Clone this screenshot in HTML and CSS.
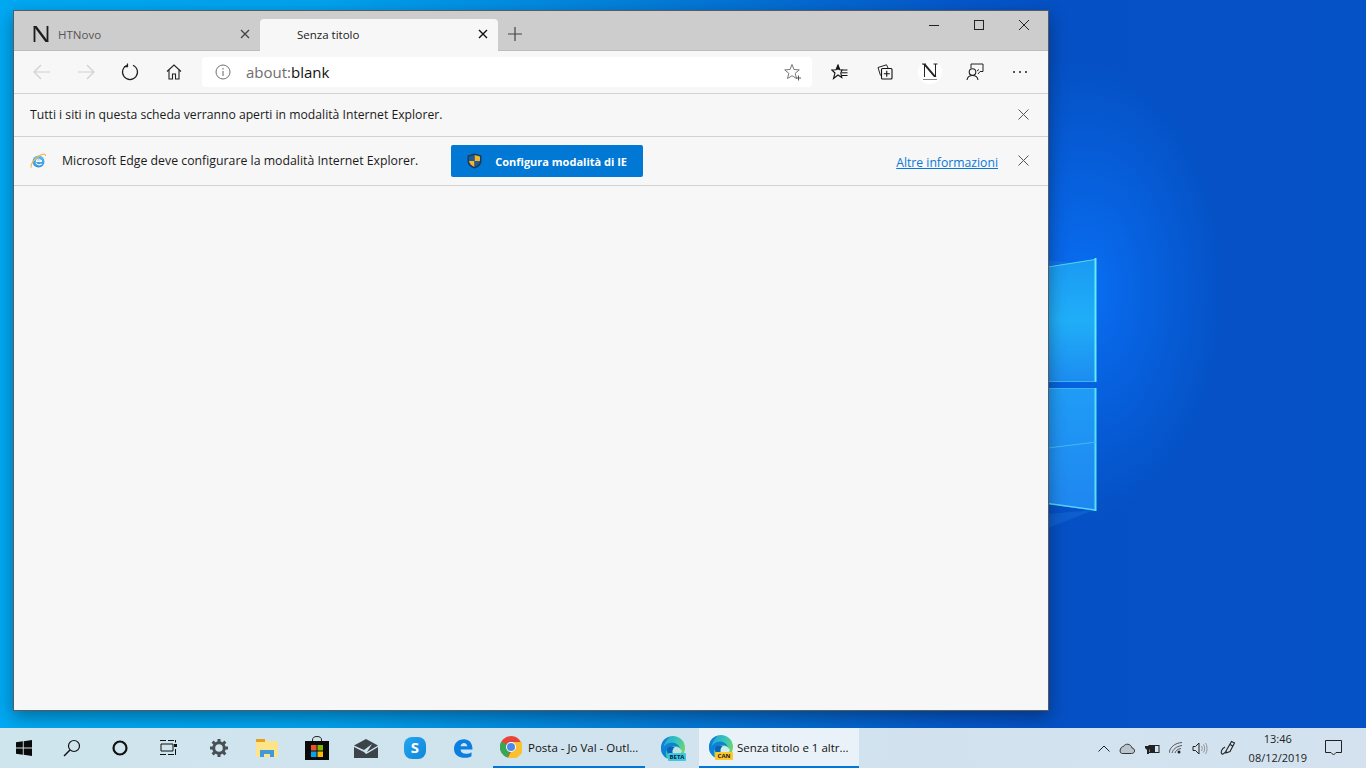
FILE: index.html
```html
<!DOCTYPE html>
<html lang="it">
<head>
<meta charset="utf-8">
<title>Senza titolo</title>
<link rel="stylesheet" href="styles.css">
</head>
<body>
<div class="desktop">
  <svg class="wallpaper-logo" width="80" height="290" viewBox="0 0 80 290">
    <defs>
      <linearGradient id="pane" x1="0" y1="0" x2="0" y2="1"><stop offset="0" stop-color="#1a9af2"/><stop offset=".5" stop-color="#20aef8"/><stop offset="1" stop-color="#1c8cf0"/></linearGradient>
      <linearGradient id="pane2" x1="0" y1="0" x2="0" y2="1"><stop offset="0" stop-color="#1f9cf6"/><stop offset="1" stop-color="#1f86f0"/></linearGradient>
    </defs>
    <polygon points="0,2 46,8 0,18" fill="#3a9cf8" opacity=".2"/>
    <polygon points="0,256 46,252 0,270" fill="#3a9cf8" opacity=".18"/>
    <polygon points="0,9 48,1 48,124 0,124" fill="url(#pane)"/>
    <polygon points="0,131 48,131 48,253 0,246" fill="url(#pane2)"/>
    <polyline points="0,9 47,1.500" fill="none" stroke="#52d4f4" stroke-width="1.200"/>
    <line x1="47.500" y1="0" x2="47.500" y2="124" stroke="#62ecf4" stroke-width="2"/>
    <line x1="0" y1="123.500" x2="47" y2="123.500" stroke="#3fb4f2" stroke-width="1"/>
    <line x1="0" y1="130.500" x2="47" y2="130.500" stroke="#3fb4f2" stroke-width="1"/>
    <line x1="47.500" y1="130" x2="47.500" y2="253" stroke="#56e2f6" stroke-width="2"/>
    <line x1="0" y1="245.500" x2="47" y2="252" stroke="#52d4f4" stroke-width="1.400"/>
    <line x1="0" y1="190" x2="48" y2="184" stroke="#46b8f4" stroke-width="1"/>
  </svg>

  <main class="window">
    <div class="tabstrip">
      <div class="tab">
        <svg class="favicon" width="18" height="18" viewBox="0 0 18 18"><path d="M2.500 1V17M15.500 1V17" fill="none" stroke="#1c1c1c" stroke-width="1.800"/><path d="M1.500 1 4.500 1 16.500 17 13.500 17Z" fill="#1c1c1c"/></svg>
        <span class="tab-title">HTNovo</span>
        <svg class="tab-x" width="10" height="10" viewBox="0 0 10 10"><path d="M1 1 9 9M9 1 1 9" stroke="#444" stroke-width="1.300"/></svg>
      </div>
      <div class="tab tab-active">
        <span class="tab-title">Senza titolo</span>
        <svg class="tab-x" width="10" height="10" viewBox="0 0 10 10"><path d="M1 1 9 9M9 1 1 9" stroke="#111" stroke-width="1.400"/></svg>
      </div>
      <svg class="newtab" width="14" height="14" viewBox="0 0 14 14"><path d="M7 0V14M0 7H14" stroke="#444" stroke-width="1.200"/></svg>
      <div class="winctl">
        <span class="winbtn"><svg width="10" height="10" viewBox="0 0 10 10"><path d="M0 5.500H10" stroke="#222" stroke-width="1"/></svg></span>
        <span class="winbtn"><svg width="10" height="10" viewBox="0 0 10 10"><rect x=".5" y=".5" width="9" height="9" fill="none" stroke="#222"/></svg></span>
        <span class="winbtn"><svg width="10" height="10" viewBox="0 0 10 10"><path d="M0 0 10 10M10 0 0 10" stroke="#222" stroke-width="1"/></svg></span>
      </div>
    </div>

    <div class="toolbar">
      <span class="navbtn"><svg width="18" height="16" viewBox="0 0 18 16"><path d="M17 8H1M8 1 1 8 8 15" fill="none" stroke="#d0d0d0" stroke-width="1.200"/></svg></span>
      <span class="navbtn"><svg width="18" height="16" viewBox="0 0 18 16"><path d="M1 8H17M10 1 17 8 10 15" fill="none" stroke="#d0d0d0" stroke-width="1.200"/></svg></span>
      <span class="navbtn"><svg width="18" height="18" viewBox="0 0 18 18"><path d="M6 2.200A7.500 7.500 0 1 0 12 2.200" fill="none" stroke="#222" stroke-width="1.200"/><path d="M6.500 .5V3.700H3" fill="none" stroke="#222" stroke-width="1.200"/></svg></span>
      <span class="navbtn"><svg width="16" height="16" viewBox="0 0 16 16"><path d="M1 7.500 8 1 15 7.500M3 6V15H6.500V10H9.500V15H13V6" fill="none" stroke="#222" stroke-width="1.100"/></svg></span>
      <div class="address">
        <svg class="addr-info" width="16" height="16" viewBox="0 0 16 16"><circle cx="8" cy="8" r="7" fill="none" stroke="#707070"/><path d="M8 7V12M8 4V5.500" stroke="#707070" stroke-width="1.100"/></svg>
        <span class="addr-text"><span class="addr-scheme">about:</span>blank</span>
        <svg class="addr-star" width="18" height="18" viewBox="0 0 18 18"><path d="M8 1.500 10 6.500 15.300 6.900 11.200 10.300 12.500 15.500 8 12.700 3.500 15.500 4.800 10.300 .7 6.900 6 6.500Z" fill="none" stroke="#777" stroke-width="1"/><path d="M14.500 12.500V17.500M12 15H17" stroke="#555" stroke-width="1"/></svg>
      </div>
      <span class="toolbtn"><svg width="17" height="16" viewBox="0 0 17 16"><path d="M7 1 8.800 5.800 11 6 9.800 9 10.800 13.500 7 11 2.500 14.500 4 9 .8 6 5 5.800Z" fill="none" stroke="#111" stroke-width="1.100"/><path d="M7 1 8.800 5.800H5Z" fill="#111"/><path d="M10.500 6H16.500M10.500 8.800H16.500M10.500 11.500H16.500" stroke="#111" stroke-width="1"/></svg></span>
      <span class="toolbtn"><svg width="16" height="16" viewBox="0 0 16 16"><path d="M3.500 11.500 1 3.500 9.500 .8 11 4" fill="none" stroke="#222" stroke-width="1"/><rect x="4.500" y="4.500" width="10.500" height="10.500" rx="1" fill="#f7f7f7" stroke="#111" stroke-width="1.100"/><path d="M9.750 6.800V12.800M6.800 9.750H12.800" stroke="#111" stroke-width="1.100"/></svg></span>
      <span class="toolbtn"><span class="profile"><svg width="16" height="18" viewBox="0 0 16 18"><path d="M2.500 1V14M13.500 1V14" fill="none" stroke="#222" stroke-width="1"/><path d="M1 1 3.500 1 14.500 14 12 14Z" fill="#222"/><path d="M0 1H4M11.500 1H15.500" stroke="#222" stroke-width="1"/><path d="M1 16.500H15" stroke="#888" stroke-width="1"/></svg></span></span>
      <span class="toolbtn"><svg width="18" height="18" viewBox="0 0 18 18"><path d="M5 5.500V1H17V8.500H14L12 11" fill="none" stroke="#222" stroke-width="1"/><path d="M11 8 13 6.500" stroke="#222"/><circle cx="6.500" cy="9" r="3.300" fill="#f7f7f7" stroke="#222" stroke-width="1.100"/><path d="M1 17C1.500 13.500 3.500 12.500 6.500 12.500S11.500 13.500 12 17" fill="none" stroke="#222" stroke-width="1.100"/></svg></span>
      <span class="toolbtn"><svg width="16" height="4" viewBox="0 0 16 4"><circle cx="2" cy="2" r="1" fill="#222"/><circle cx="8" cy="2" r="1" fill="#222"/><circle cx="14" cy="2" r="1" fill="#222"/></svg></span>
    </div>

    <div class="infobar info-first">
      <span class="info-text info-start">Tutti i siti in questa scheda verranno aperti in modalità Internet Explorer.</span>
      <svg class="info-x info-x-first" width="11" height="11" viewBox="0 0 11 11"><path d="M.5 .5 10.500 10.500M10.500 .5 .5 10.500" stroke="#555" stroke-width="1"/></svg>
    </div>

    <div class="infobar info-second">
      <svg class="ie-icon" width="16" height="16" viewBox="0 0 16 16"><defs><linearGradient id="ieball" x1="0" y1="0" x2="0" y2="1"><stop offset="0" stop-color="#63bdf0"/><stop offset="1" stop-color="#2f8fdc"/></linearGradient></defs><circle cx="8.500" cy="8.500" r="6" fill="url(#ieball)"/><path d="M6 7.300H12V9H6ZM6 9C6.500 11 9 11.800 11 10.500L12.500 11.300C10 13.300 6.500 12.500 5.500 10ZM6 7.300C6.500 5.300 10 5 11.500 7.300H10C9.500 6.300 7.500 6.300 7 7.300Z" fill="#f2f8fd"/><path d="M1.500 14.500C-.5 12.500 5 4 12 1.500 14 .8 15.800 1 15.500 3" fill="none" stroke="#f0b84a" stroke-width="1.100"/></svg>
      <span class="info-text info-text-long">Microsoft Edge deve configurare la modalità Internet Explorer.</span>
      <button class="primary" type="button">
        <svg width="15" height="16" viewBox="0 0 15 16"><path d="M7.500 .5 14.500 2.500V8C14.500 12 11 14.500 7.500 15.500 4 14.500 .5 12 .5 8V2.500Z" fill="#1c3a5c"/><path d="M7.500 2 13 3.500V8H7.500Z" fill="#f5b52a"/><path d="M7.500 8H2C2.300 11 5 13 7.500 14Z" fill="#f5b52a"/><path d="M7.500 2V8H2V3.500Z" fill="#245a94"/><path d="M7.500 8H13C12.700 11 10 13 7.500 14Z" fill="#245a94"/></svg>
        <span>Configura modalità di IE</span>
      </button>
      <a class="more" href="#">Altre informazioni</a>
      <svg class="info-x info-x-second" width="11" height="11" viewBox="0 0 11 11"><path d="M.5 .5 10.500 10.500M10.500 .5 .5 10.500" stroke="#555" stroke-width="1"/></svg>
    </div>

    <div class="content"></div>
  </main>

  <footer class="taskbar">
    <span class="slot"><svg width="16" height="16" viewBox="0 0 16 16"><path d="M0 2.300 6.800 1.300V7.500H0ZM7.700 1.200 16 0V7.500H7.700ZM0 8.400H6.800V14.700L0 13.700ZM7.700 8.400H16V16L7.700 14.800Z" fill="#0a0a0a"/></svg></span>
    <span class="slot"><svg width="18" height="18" viewBox="0 0 18 18"><circle cx="11" cy="7" r="5.500" fill="none" stroke="#111" stroke-width="1.200"/><path d="M7 11 1 17" stroke="#111" stroke-width="1.400"/></svg></span>
    <span class="slot"><svg width="16" height="16" viewBox="0 0 16 16"><circle cx="8" cy="8" r="6.500" fill="none" stroke="#111" stroke-width="2.200"/></svg></span>
    <span class="slot"><svg width="17" height="16" viewBox="0 0 17 16"><path d="M0 .5H6M8 .5H14M1 4V11H13V4H1M0 14.500H6M8 14.500H14" fill="none" stroke="#111" stroke-width="1"/><rect x="14" y="4" width="3" height="3" fill="#111"/><path d="M15.500 0V2.500M15.500 9V15" stroke="#111"/></svg></span>
    <span class="slot slot-settings"><svg width="18" height="18" viewBox="0 0 18 18"><circle cx="9" cy="9" r="5.300" fill="none" stroke="#484f55" stroke-width="3"/><path d="M9 0V3.500M9 14.500V18M0 9H3.500M14.500 9H18M2.600 2.600 5 5M13 13 15.400 15.400M15.400 2.600 13 5M5 13 2.600 15.400" stroke="#484f55" stroke-width="3"/></svg></span>
    <span class="slot"><svg width="22" height="18" viewBox="0 0 22 18"><path d="M0 1H9L11 2H22V18H0Z" fill="#fde38a"/><path d="M0 0H9V3H0Z" fill="#e3a21a"/><path d="M4 18V11H18V18H14V15H8V18Z" fill="#3f9ad6"/></svg></span>
    <span class="slot slot-store"><svg width="24" height="24" viewBox="0 0 24 24"><path d="M7.500 6V4A4.500 3.500 0 0 1 16.500 4V6" fill="none" stroke="#222" stroke-width="1"/><rect y="5" width="24" height="19" fill="#0a0a0a"/><rect x="6" y="9" width="5.500" height="5.500" fill="#f25022"/><rect x="12.500" y="9" width="5.500" height="5.500" fill="#7fba00"/><rect x="6" y="15.500" width="5.500" height="5.500" fill="#00a4ef"/><rect x="12.500" y="15.500" width="5.500" height="5.500" fill="#ffb900"/></svg></span>
    <span class="slot slot-mail"><svg width="24" height="19" viewBox="0 0 24 19"><path d="M0 6.500 12 0 24 6.500 13 13 18 5 10 11Z" fill="#3d4449"/><path d="M0 8 10 13 12 15 14 14 24 8V19H0Z" fill="#3d4449"/></svg></span>
    <span class="slot slot-skype"><svg width="22" height="22" viewBox="0 0 22 22"><defs><linearGradient id="sk" x1="0" y1="0" x2="1" y2="1"><stop offset="0" stop-color="#26a6f0"/><stop offset="1" stop-color="#0e86d8"/></linearGradient></defs><rect width="22" height="22" rx="8" fill="url(#sk)"/><text class="skype-s" x="11" y="16" text-anchor="middle">S</text></svg></span>
    <span class="slot"><svg width="20" height="20" viewBox="0 0 20 20"><path d="M1 11C1 5 5 1.200 11 1.200 16 1.200 19.500 4.500 19.500 11.500H7.500C7.800 14.500 10 15.800 13 15.800 15 15.800 17 15.300 18.500 14.300V18.300C16.500 19.300 14.500 19.800 12 19.800 5.500 19.800 1 16.500 1 11ZM7.500 8.300H14.300C14.200 6.300 12.800 5 11 5 9.200 5 7.800 6.300 7.500 8.300Z" fill="#0c7ee0"/></svg></span>
    <div class="task task-chrome">
      <svg class="task-icon" width="22" height="22" viewBox="0 0 22 22"><circle cx="11" cy="11" r="11" fill="#e8453a"/><path d="M11 11 1.500 5.500A11 11 0 0 0 8 21.600Z" fill="#34a853"/><path d="M11 6H21.700A11 11 0 0 1 8 21.600L13.500 11Z" fill="#fbc02d"/><circle cx="11" cy="11" r="5" fill="#fff"/><circle cx="11" cy="11" r="4" fill="#4a8af0"/></svg>
      <span class="task-label">Posta - Jo Val - Outl...</span>
    </div>
    <span class="slot slot-beta">
      <svg width="24" height="24" viewBox="0 0 24 24"><defs><linearGradient id="edgeA" x1="0" y1="0" x2="1" y2=".6"><stop offset="0" stop-color="#1d9bdc"/><stop offset=".55" stop-color="#36c4bc"/><stop offset="1" stop-color="#74d66a"/></linearGradient></defs><circle cx="12" cy="12" r="12" fill="url(#edgeA)"/><path d="M9 .4A12 12 0 0 0 6 22.400C3 17 6 10 13 10 17 10 19 11.500 20 14 18 8 13 5 8 7 5 8 3 10 2.500 12 3 7 6 3 9 .4Z" fill="#0f80d8"/><path d="M6 14C6 19 10 22 15 21 11 19 10 14 14 11 9 9.500 6 11 6 14Z" fill="#0a62b6"/><path d="M14 11C11 13 11 17 13 19 16 20 20 18 21 15 19 12 17 10.500 14 11Z" fill="#d4e6ee" opacity=".85"/></svg>
      <span class="badge badge-beta">BETA</span>
    </span>
    <div class="task task-active">
      <span class="task-icon-wrap">
        <svg width="24" height="24" viewBox="0 0 24 24"><defs><linearGradient id="edgeB" x1="0" y1="0" x2="1" y2=".6"><stop offset="0" stop-color="#1d9bdc"/><stop offset=".55" stop-color="#36c4bc"/><stop offset="1" stop-color="#74d66a"/></linearGradient></defs><circle cx="12" cy="12" r="12" fill="url(#edgeB)"/><path d="M9 .4A12 12 0 0 0 6 22.400C3 17 6 10 13 10 17 10 19 11.500 20 14 18 8 13 5 8 7 5 8 3 10 2.500 12 3 7 6 3 9 .4Z" fill="#0f80d8"/><path d="M6 14C6 19 10 22 15 21 11 19 10 14 14 11 9 9.500 6 11 6 14Z" fill="#0a62b6"/><path d="M14 11C11 13 11 17 13 19 16 20 20 18 21 15 19 12 17 10.500 14 11Z" fill="#eaf2f9" opacity=".85"/></svg>
        <span class="badge badge-can">CAN</span>
      </span>
      <span class="task-label">Senza titolo e 1 altr...</span>
    </div>
    <div class="tray">
      <svg class="tray-icon" width="12" height="7" viewBox="0 0 12 7"><path d="M.5 6.500 6 1 11.500 6.500" fill="none" stroke="#222" stroke-width="1"/></svg>
      <svg class="tray-icon" width="16" height="11" viewBox="0 0 16 11"><path d="M3.500 10.500H12.500C16.500 10.500 16.500 5.500 13 5 12 .5 6 0 4.500 3.500 1 3.500-.5 10.500 3.500 10.500Z" fill="#b9c4cc" stroke="#333" stroke-width="1"/></svg>
      <svg class="tray-icon" width="16" height="11" viewBox="0 0 16 11"><path d="M3 0V3M6 0V3M1 3H7V5L5 7V11H3V7L1 5Z" fill="#222"/><rect x="5" y="2.500" width="10" height="7" fill="none" stroke="#222"/><rect x="6" y="3" width="5" height="6" fill="#222"/></svg>
      <svg class="tray-icon" width="14" height="12" viewBox="0 0 14 12"><path d="M0 11C1 5 6 1 13 .5M3 11C4 7.500 7 4.500 13 3.500M6 11C6.500 9 8.500 7 12 6.500" fill="none" stroke="#555" stroke-width="1"/><circle cx="10" cy="10" r="1.500" fill="#222"/></svg>
      <svg class="tray-icon" width="16" height="13" viewBox="0 0 16 13"><path d="M1 4.500H3.500L7 1V12L3.500 8.500H1Z" fill="none" stroke="#222" stroke-width="1"/><path d="M9.500 4C10.500 5.500 10.500 7.500 9.500 9M11.500 2.500C13 4.500 13 8.500 11.500 10.500M13.500 1C15.500 4 15.500 9 13.500 12" fill="none" stroke="#888" stroke-width=".9"/></svg>
      <svg class="tray-icon tray-pen" width="16" height="16" viewBox="0 0 16 16"><path d="M6 11 11.500 1.500 14.500 3 10 11.500 6 13ZM9.500 4 12.500 6" fill="none" stroke="#222" stroke-width="1.100"/><path d="M5 7C1 9 .5 13 2 14 4 15 5 11 6.500 12" fill="none" stroke="#222" stroke-width="1.100"/></svg>
      <div class="clock"><span>13:46</span><span>08/12/2019</span></div>
      <svg class="notif" width="17" height="16" viewBox="0 0 17 16"><path d="M.5 .5H16.500V12.500H11L8.500 15 6 12.500H.5Z" fill="none" stroke="#222" stroke-width="1"/></svg>
    </div>
  </footer>
</div>
</body>
</html>
```

FILE: styles.css
```css
* { box-sizing: border-box; }
html, body { margin: 0; height: 100%; overflow: hidden; }
body { font-family: "Open Sans", "Noto Sans", sans-serif; color: #1a1a1a; }

.desktop {
  position: relative;
  width: 1366px;
  height: 768px;
  overflow: hidden;
  display: flex;
  flex-direction: column;
  justify-content: flex-end;
  background:
    radial-gradient(ellipse 140px 230px at 1085px 290px, rgba(10,118,255,.8), rgba(10,118,255,0)),
    linear-gradient(90deg, #00a8f2 0, #01a2ee 320px, #0480da 620px, #0558ca 950px, #0550c4 1060px, #0552c6 1366px);
}

.wallpaper-logo { position: absolute; left: 1048px; top: 258px; }

.window {
  position: absolute;
  left: 13px;
  top: 10px;
  width: 1036px;
  height: 701px;
  display: flex;
  flex-direction: column;
  background: #f7f7f7;
  border: 1px solid #555b60;
  box-shadow: 0 6px 16px rgba(0,0,0,.35);
}

.tabstrip {
  height: 40px;
  flex: none;
  display: flex;
  align-items: flex-end;
  background: #cdcdcd;
  border-bottom: 1px solid #bdbdbd;
}
.tab {
  width: 246px;
  height: 32px;
  display: flex;
  align-items: center;
  padding: 0 10px 0 18px;
  font-size: 11.5px;
  color: #555;
}
.tab-active {
  width: 238px;
  padding-left: 37px;
  padding-bottom: 2px;
  background: #f7f7f7;
  color: #1a1a1a;
  border-radius: 4px 4px 0 0;
  margin-bottom: -1px;
}
.favicon { margin-right: 8px; flex: none; }
.tab-title { flex: 1; }
.newtab { margin: 0 0 9px 10px; }
.winctl { margin-left: auto; display: flex; align-self: flex-start; margin-right: 2px; }
.winbtn { width: 45px; height: 28px; display: flex; align-items: center; justify-content: center; }

.toolbar {
  height: 43px;
  flex: none;
  display: flex;
  align-items: center;
  padding: 0 6px 0 6px;
  border-bottom: 1px solid #d2d2d2;
}
.navbtn { width: 44px; flex: none; display: flex; justify-content: center; }
.toolbtn { width: 45px; flex: none; display: flex; justify-content: center; align-items: center; }
.address {
  flex: 1;
  height: 30px;
  margin: 0 5px 0 6px;
  display: flex;
  align-items: center;
  padding: 0 10px 0 13px;
  background: #fff;
  border-radius: 3px;
}
.addr-text { flex: 1; margin-left: 15px; font-size: 15px; color: #111; }
.addr-scheme { color: #6e6e6e; }
.profile {
  width: 24px; height: 24px;
  border-radius: 50%;
  background: #fff;
  display: flex; align-items: center; justify-content: center;
}

.infobar {
  flex: none;
  display: flex;
  align-items: center;
  border-bottom: 1px solid #d2d2d2;
  padding: 0 19px 0 16px;
  font-size: 12.2px;
}
.info-first { height: 43px; }
.info-second { height: 49px; }
.info-text { color: #1a1a1a; margin-bottom: 2px; }
.info-text-long { font-size: 12.3px; }
.info-start { flex: 1; }
.info-x-first { margin-bottom: 2px; }
.ie-icon { margin-right: 16px; flex: none; margin-bottom: 1px; }
.primary {
  margin-left: 33px;
  width: 192px;
  height: 32px;
  display: flex;
  align-items: center;
  gap: 13px;
  padding: 0 0 0 16px;
  background: #0078d4;
  color: #fff;
  border: 0;
  border-radius: 2px;
  font: 700 11px "Open Sans", sans-serif;
}
.more { margin-left: auto; margin-top: 3px; font-size: 12.2px; color: #0a78d8; }
.info-x-second { margin-left: 20px; margin-bottom: 1px; }
.content { flex: 1; background: #f7f7f7; }

.taskbar {
  position: relative;
  height: 40px;
  flex: none;
  display: flex;
  align-items: stretch;
  background: linear-gradient(90deg, #cfe5ee 0%, #d0e3ee 50%, #d4e2f0 100%);
}
.slot {
  position: relative;
  width: 48px;
  flex: none;
  display: flex;
  align-items: center;
  justify-content: center;
}
.slot-settings { margin-left: 3px; }
.slot-store { margin-left: 2px; }
.slot-mail, .slot-skype { margin-left: 1px; }
.skype-s { font: 700 15px "Open Sans", sans-serif; fill: #fff; }
.task {
  display: flex;
  align-items: center;
  flex: none;
  font-size: 11.5px;
  border-bottom: 2px solid #0078d7;
  color: #111;
}
.task-chrome { width: 152px; margin-left: 6px; padding-left: 7px; gap: 6px; }
.task-active { width: 160px; padding-left: 10px; gap: 4px; background: #eaf2f9; margin-left: 2px; }
.slot-beta { margin-left: 4px; }
.task-icon-wrap { position: relative; display: flex; }
.badge {
  position: absolute;
  font: 700 6px "Open Sans", sans-serif;
  padding: 0;
  line-height: 8px;
  border-radius: 1px;
  color: #10202c;
}
.badge-beta { left: 19px; top: 25px; width: 18px; background: #3cc8e4; text-align: center; }
.badge-can { left: 6px; top: 17px; width: 18px; background: #ffc627; text-align: center; }

.tray {
  margin-left: auto;
  display: flex;
  align-items: center;
  padding-right: 24px;
}
.tray-icon { margin-left: 9px; flex: none; }
.tray-pen { margin-left: 12px; }
.clock {
  display: flex;
  flex-direction: column;
  align-items: center;
  margin-left: 13px;
  font-size: 11px;
  line-height: 19px;
  color: #222;
}
.notif { margin-left: 18px; }
```
